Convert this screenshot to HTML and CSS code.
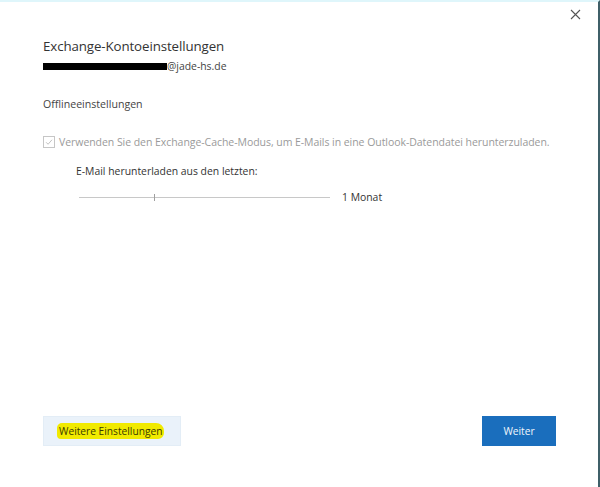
FILE: index.html
```html
<!DOCTYPE html>
<html lang="de">
<head>
<meta charset="utf-8">
<link rel="stylesheet" href="styles.css">
</head>
<body>
<div class="window">
  <div class="topbar">
    <button class="close" aria-label="Schließen">
      <svg width="11" height="11" viewBox="0 0 11 11"><path d="M1 1L10 10M10 1L1 10" stroke="#555" stroke-width="1.1" fill="none"/></svg>
    </button>
  </div>
  <div class="content">
    <h1 class="title">Exchange-Kontoeinstellungen</h1>
    <div class="account"><span class="redact"></span>@jade-hs.de</div>
    <div class="section">Offlineeinstellungen</div>
    <label class="check">
      <span class="box">
        <svg width="12" height="12" viewBox="0 0 12 12"><path d="M2.5 6.3L4.9 8.7L9.6 3.3" stroke="#b5b5b5" stroke-width="1" fill="none"/></svg>
      </span>
      <span class="checktext">Verwenden Sie den Exchange-Cache-Modus, um E-Mails in eine Outlook-Datendatei herunterzuladen.</span>
    </label>
    <div class="sub">E-Mail herunterladen aus den letzten:</div>
    <div class="sliderrow">
      <div class="slider"><span class="thumb"></span></div>
      <span class="value">1 Monat</span>
    </div>
  </div>
  <div class="footer">
    <button class="btn secondary"><span class="marker">Weitere Einstellungen</span></button>
    <button class="btn primary">Weiter</button>
  </div>
</div>
</body>
</html>
```
FILE: styles.css
```css
* { box-sizing: border-box; }
html, body { margin: 0; padding: 0; }
body {
  width: 600px;
  height: 487px;
  background: #ffffff;
  font-family: "Open Sans", "Noto Sans", sans-serif;
  color: #333;
  overflow: hidden;
}
.window {
  width: 600px;
  height: 487px;
  border-top: 2px solid #dff6fb;
  border-right: 2px solid #3f5f68;
  display: flex;
  flex-direction: column;
  position: relative;
}
.topbar {
  height: 34px;
  display: flex;
  justify-content: flex-end;
  align-items: flex-start;
  padding-right: 17px;
  padding-top: 7px;
}
.close {
  background: none;
  border: 0;
  padding: 0;
  width: 11px;
  height: 11px;
  display: block;
}
.close svg { display: block; }
.content {
  padding-left: 43px;
  flex: 1;
}
.title {
  margin: 0;
  font-weight: 400;
  font-size: 13.3px;
  line-height: 20px;
  color: #333;
  letter-spacing: -0.1px;
}
.account {
  font-size: 10.4px;
  line-height: 14px;
  color: #444;
  display: flex;
  align-items: center;
  margin-top: 3px;
}
.redact {
  display: inline-block;
  width: 124px;
  height: 7px;
  background: #000;
}
.section {
  margin-top: 24px;
  font-size: 10.6px;
  line-height: 14px;
  color: #444;
}
.check {
  margin-top: 24px;
  display: flex;
  align-items: center;
  gap: 4px;
}
.box {
  width: 12px;
  height: 12px;
  border: 1px solid #c6c6c6;
  display: flex;
  align-items: center;
  justify-content: center;
}
.box svg { display: block; }
.checktext {
  font-size: 10.5px;
  line-height: 14px;
  color: #9a9a9a;
  letter-spacing: -0.05px;
}
.sub {
  margin-top: 15px;
  margin-left: 33px;
  font-size: 10.4px;
  line-height: 14px;
  color: #333;
}
.sliderrow {
  margin-top: 12px;
  margin-left: 36px;
  display: flex;
  align-items: center;
  gap: 12px;
}
.slider {
  width: 251px;
  height: 1px;
  background: #c8c8c8;
  position: relative;
}
.thumb {
  position: absolute;
  left: 75px;
  top: -3px;
  width: 1px;
  height: 7px;
  background: #a0a0a0;
}
.value {
  font-size: 10.4px;
  line-height: 14px;
  color: #333;
}
.footer {
  display: flex;
  justify-content: space-between;
  align-items: center;
  padding: 0 42px 0 43px;
  margin-bottom: 41px;
}
.btn {
  height: 30px;
  border: 0;
  font-family: inherit;
  font-size: 10.2px;
  padding: 0;
}
.secondary {
  width: 138px;
  background: #eaf2fa;
  border: 1px solid #e3edf6;
  display: flex;
  align-items: center;
  padding-left: 13px;
  color: #333;
}
.marker {
  background: #f1ea00;
  border-radius: 5px 8px 6px 4px;
  padding: 1px 2px;
  color: #3a3a00;
}
.primary {
  width: 74px;
  background: #1a6ebd;
  color: #f2f6fb;
}
```
